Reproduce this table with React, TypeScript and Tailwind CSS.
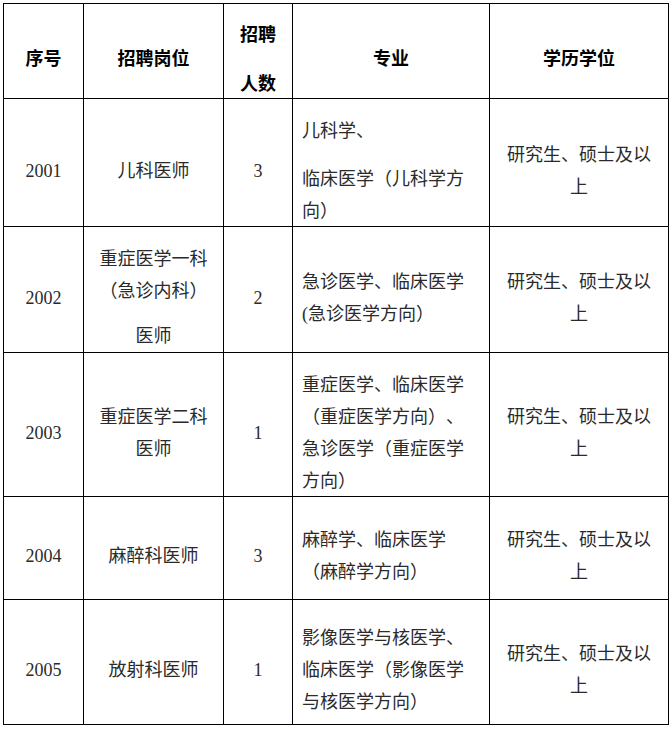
import React from "react";

type Row = {
	id: string;
	post: string[][];
	count: string;
	major: string[][];
};

const rows: Row[] = [
	{
		id: "2001",
		post: [["儿科医师"]],
		count: "3",
		major: [["儿科学、"], ["临床医学（儿科学方", "向）"]],
	},
	{
		id: "2002",
		post: [["重症医学一科", "（急诊内科）"], ["医师"]],
		count: "2",
		major: [["急诊医学、临床医学", "(急诊医学方向）"]],
	},
	{
		id: "2003",
		post: [["重症医学二科", "医师"]],
		count: "1",
		major: [["重症医学、临床医学", "（重症医学方向）、", "急诊医学（重症医学", "方向）"]],
	},
	{
		id: "2004",
		post: [["麻醉科医师"]],
		count: "3",
		major: [["麻醉学、临床医学", "（麻醉学方向）"]],
	},
	{
		id: "2005",
		post: [["放射科医师"]],
		count: "1",
		major: [["影像医学与核医学、", "临床医学（影像医学", "与核医学方向）"]],
	},
];

const Paras = ({ paras, gap }: { paras: string[][]; gap: string }) => (
	<div className={`flex flex-col ${gap}`}>
		{paras.map((p, i) => (
			<div key={i}>
				{p.map((line, j) => (
					<div key={j}>{line}</div>
				))}
			</div>
		))}
	</div>
);

const App = () => {
	const cell = "bg-white flex flex-col justify-center pt-[16px]";
	return (
		<div
			className="min-h-screen bg-white pl-[3px] pt-[3px] text-[18px] leading-[32px] text-[#2a2a2a] [text-spacing-trim:space-all]"
			style={{ fontFamily: '"Liberation Serif", "Noto Sans CJK SC", serif' }}
		>
			<div className="grid w-fit grid-cols-[79px_139px_68px_196px_178px] grid-rows-[94px_127px_125px_143px_102px_124px] gap-px bg-black p-px">
				{/* Header */}
				<div className={`${cell} items-center font-bold text-black pt-[14px]`}>序号</div>
				<div className={`${cell} items-center font-bold text-black pt-[14px]`}>招聘岗位</div>
				<div className={`${cell} items-center font-bold text-black pt-[14px]`}>
					<div>招聘</div>
					<div className="mt-[17px]">人数</div>
				</div>
				<div className={`${cell} items-center font-bold text-black pt-[14px]`}>专业</div>
				<div className={`${cell} items-center font-bold text-black pt-[14px]`}>学历学位</div>

				{rows.map((r) => (
					<React.Fragment key={r.id}>
						<div className={`${cell} items-center`}>{r.id}</div>
						<div className={`${cell} items-center text-center`}>
							<Paras paras={r.post} gap="gap-[13px]" />
						</div>
						<div className={`${cell} items-center`}>{r.count}</div>
						<div className={`${cell} items-start px-[9px]`}>
							<Paras paras={r.major} gap="gap-[16px]" />
						</div>
						<div className={`${cell} items-center text-center`}>
							<div>研究生、硕士及以</div>
							<div>上</div>
						</div>
					</React.Fragment>
				))}
			</div>
		</div>
	);
};

export default App;
